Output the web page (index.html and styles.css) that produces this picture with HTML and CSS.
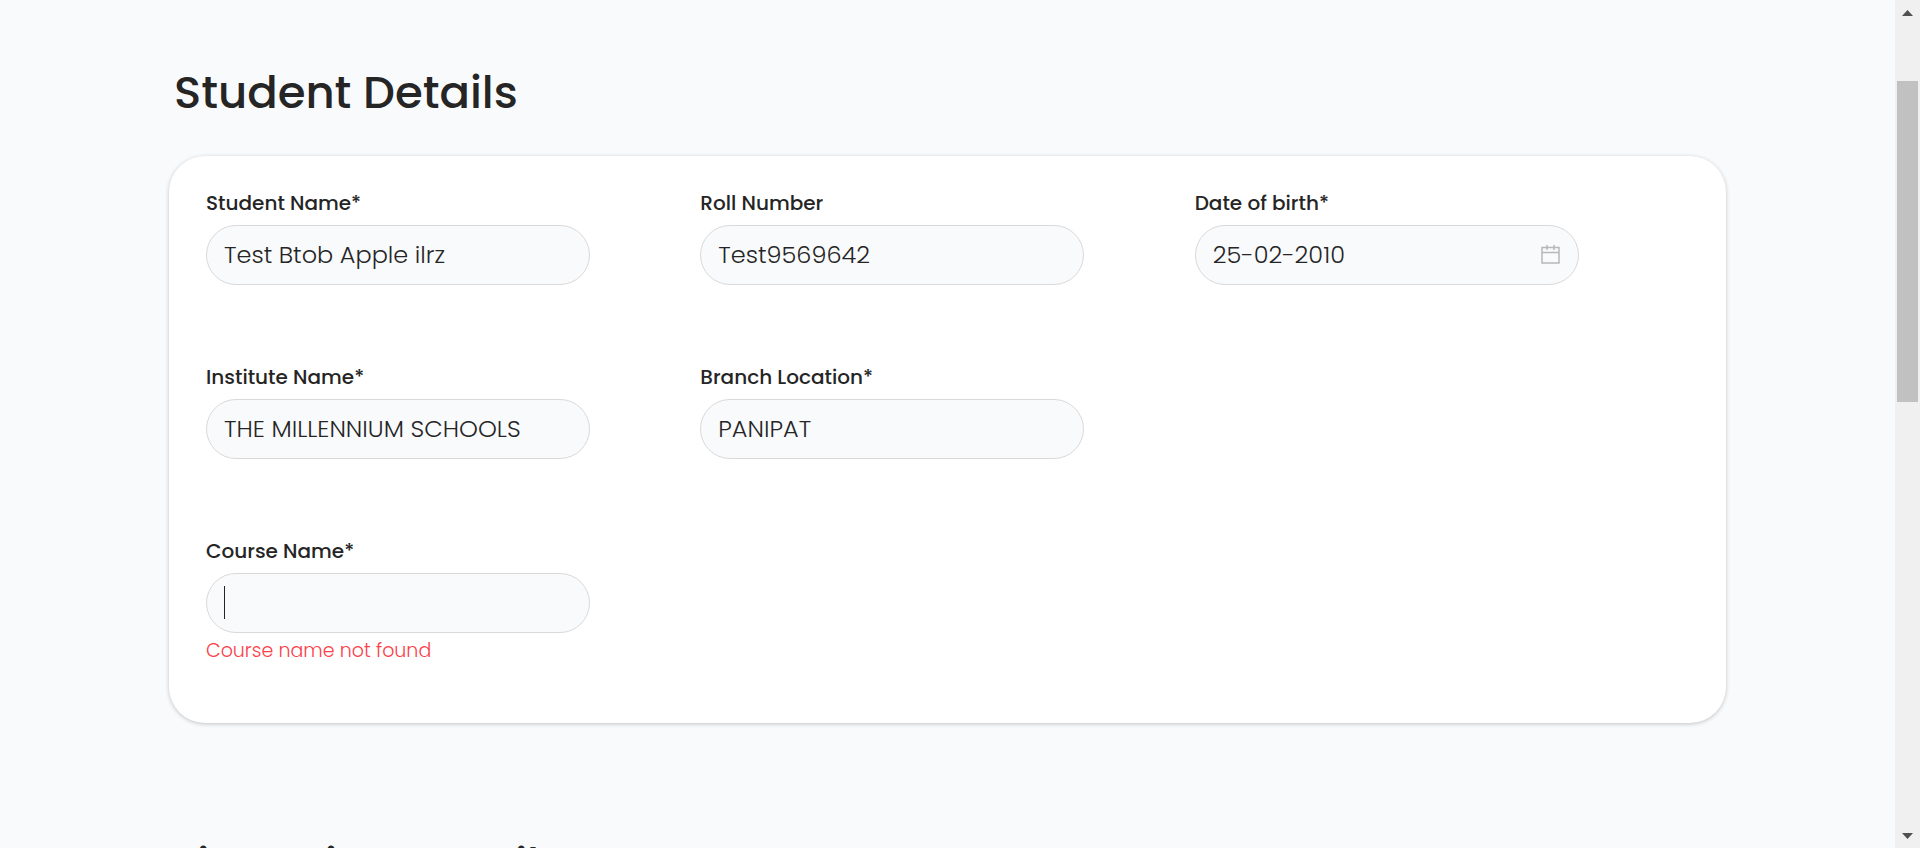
FILE: index.html
```html
<!DOCTYPE html>
<html lang="en">
<head>
<meta charset="utf-8">
<meta name="viewport" content="width=device-width, initial-scale=1">
<title>Student Details</title>
<link rel="stylesheet" href="styles.css">
</head>
<body>
<div class="shell">
  <main class="page">
    <section class="section">
      <h1 class="heading">Student Details</h1>
      <form class="card">
        <div class="field">
          <label class="label" for="student">Student Name*</label>
          <div class="control"><input class="input" id="student" type="text" value="Test Btob Apple ilrz"></div>
        </div>
        <div class="field">
          <label class="label" for="roll">Roll Number</label>
          <div class="control"><input class="input" id="roll" type="text" value="Test9569642"></div>
        </div>
        <div class="field">
          <label class="label" for="dob">Date of birth*</label>
          <div class="control">
            <input class="input" id="dob" type="text" value="25-02-2010">
            <svg class="calendar" viewBox="0 0 19 19" aria-hidden="true">
              <path fill="none" stroke="currentColor" stroke-width="1.500" d="M1 2.500h17v15.500H1zM1 7.500h17M6 0v5M13 0v5"/>
            </svg>
          </div>
        </div>
        <div class="field first">
          <label class="label" for="institute">Institute Name*</label>
          <div class="control"><input class="input" id="institute" type="text" value="THE MILLENNIUM SCHOOLS"></div>
        </div>
        <div class="field">
          <label class="label" for="branch">Branch Location*</label>
          <div class="control"><input class="input" id="branch" type="text" value="PANIPAT"></div>
        </div>
        <div class="field first">
          <label class="label" for="course">Course Name*</label>
          <div class="control">
            <input class="input active" id="course" type="text" aria-describedby="course-error">
            <span class="caret"></span>
          </div>
          <p class="error" id="course-error">Course name not found</p>
        </div>
      </form>
    </section>
    <section class="section">
      <h2 class="heading">Financing Details</h2>
    </section>
  </main>
  <div class="scrollbar">
    <button class="arrow" type="button" aria-label="Scroll up">
      <svg viewBox="0 0 11 6" aria-hidden="true"><path fill="currentColor" d="M0 6 5.500 0 11 6z"/></svg>
    </button>
    <div class="track"><div class="thumb"></div></div>
    <button class="arrow" type="button" aria-label="Scroll down">
      <svg viewBox="0 0 11 6" aria-hidden="true"><path fill="currentColor" d="M0 0 5.500 6 11 0z"/></svg>
    </button>
  </div>
</div>
</body>
</html>
```

FILE: styles.css
```css
* {
  box-sizing: border-box;
}

body {
  margin: 0;
  background: #f9fafc;
  color: #252525;
  font-family: Poppins, Inter, sans-serif;
}

.shell {
  display: flex;
  height: 100vh;
}

.page {
  flex: 1;
  min-width: 0;
  overflow: hidden;
  padding: 57px 24px 0;
}

.section {
  max-width: 1557px;
  margin: 0 auto 106px;
}

.heading {
  margin: 0 0 27px;
  padding-left: 5px;
  font-size: 45px;
  font-weight: 500;
  line-height: 72px;
}

.card {
  display: grid;
  grid-template-columns: repeat(3, 1fr);
  grid-auto-rows: 174px;
  padding: 33px 37px 12px;
  border-radius: 36px;
  background: #fff;
  box-shadow: 0 1px 4px rgba(0, 0, 0, 0.22);
}

.field {
  display: flex;
  flex-direction: column;
  align-items: flex-start;
}

.first {
  grid-column: 1;
}

.label {
  margin-bottom: 8px;
  font-size: 20px;
  font-weight: 500;
  line-height: 28px;
}

.control {
  position: relative;
  width: 384px;
  max-width: 100%;
}

.input {
  display: block;
  width: 100%;
  height: 60px;
  padding: 0 17px 2px;
  border: 1px solid #d9d9d9;
  border-radius: 30px;
  outline: 0;
  background: #f9fafc;
  color: inherit;
  font: inherit;
  font-size: 24px;
  font-weight: 300;
}

.active {
  caret-color: transparent;
}

.calendar {
  position: absolute;
  top: 20px;
  right: 19px;
  width: 19px;
  height: 19px;
  color: #b8b8b8;
}

.caret {
  position: absolute;
  top: 13px;
  left: 18px;
  width: 1px;
  height: 33px;
  background: #252525;
}

.error {
  margin: 4px 0 0;
  color: #fa4049;
  font-size: 19px;
  font-weight: 300;
  line-height: 28px;
}

.scrollbar {
  display: flex;
  flex-direction: column;
  width: 25px;
  background: #f0f0f0;
}

.arrow {
  display: flex;
  align-items: center;
  justify-content: center;
  height: 25px;
  padding: 0;
  border: 0;
  background: none;
  color: #505050;
}

.arrow svg {
  width: 11px;
  height: 6px;
}

.track {
  flex: 1;
  padding: 56px 2px 0;
}

.thumb {
  height: 321px;
  background: #c1c1c1;
}
```
